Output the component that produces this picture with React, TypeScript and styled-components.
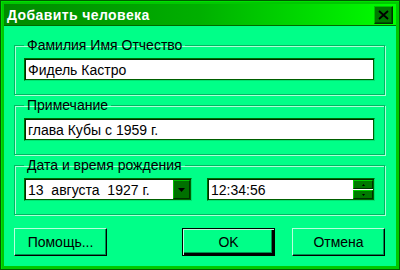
import styled, { createGlobalStyle } from "styled-components";

const GlobalStyle = createGlobalStyle`
  html, body {
    margin: 0;
    padding: 0;
    background: #00cc00;
  }
  * {
    box-sizing: border-box;
  }
`;

const Window = styled.div`
  width: 400px;
  height: 270px;
  display: flex;
  flex-direction: column;
  padding: 3px;
  background: #00c800;
  border: 1px solid #005a00;
  box-shadow: inset 1px 1px 0 #00e000;
  font-family: "Liberation Sans", Arial, sans-serif;
  font-size: 14px;
  color: #000;
`;

const TitleBar = styled.div`
  height: 22px;
  flex: none;
  display: flex;
  align-items: center;
  justify-content: space-between;
  padding: 0 3px 0 3px;
  background: linear-gradient(to right, #008a00, #00b000 50%, #00ff00);
  border-bottom: 1px solid #006a00;
`;

const Title = styled.span`
  color: #fff;
  font-weight: bold;
  font-size: 14px;
  letter-spacing: 0.4px;
`;

const CloseButton = styled.button`
  width: 19px;
  height: 18px;
  padding: 0;
  display: flex;
  align-items: center;
  justify-content: center;
  background: #007a00;
  border: 1px solid;
  border-color: #00c000 #003000 #003000 #00c000;
  box-shadow: inset -1px -1px 0 #005000;
`;

const Body = styled.div`
  flex: 1;
  display: flex;
  flex-direction: column;
  gap: 3px;
  padding: 12px 11px 0 10px;
  background: #00ff88;
`;

const Group = styled.fieldset<{ $last?: boolean }>`
  margin: 0;
  padding: 5px 9px ${(p) => (p.$last ? "11px" : "13px")} 9px;
  border: 1px solid #00b862;
  box-shadow: inset 1px 1px 0 #a8ffd4, 1px 1px 0 #a8ffd4;
  min-width: 0;
`;

const Legend = styled.legend`
  margin-left: 0;
  padding: 0 3px;
  font-size: 14px;
  line-height: 15px;
`;

const Field = styled.div<{ $width?: number }>`
  height: 23px;
  width: ${(p) => (p.$width ? `${p.$width}px` : "100%")};
  display: flex;
  align-items: center;
  background: #fff;
  border: 1px solid;
  border-color: #006a00 #00e070 #00e070 #006a00;
  box-shadow: inset 1px 1px 0 #002a00, inset -1px -1px 0 #006000;
  padding: 0 3px;
  white-space: pre;
`;

const FieldText = styled.span`
  flex: 1;
  padding-top: 1px;
`;

const Row = styled.div`
  display: flex;
  gap: 15px;
  height: 25px;
`;

const DropButton = styled.div`
  width: 17px;
  height: 19px;
  margin-right: -2px;
  display: flex;
  align-items: center;
  justify-content: center;
  background: #007000;
  border: 1px solid;
  border-color: #00c000 #003000 #003000 #00c000;
`;

const Spinner = styled.div`
  display: flex;
  flex-direction: column;
  gap: 1px;
  margin-right: -2px;
`;

const SpinButton = styled.div`
  width: 20px;
  height: 9px;
  display: flex;
  align-items: center;
  justify-content: center;
  background: #007a00;
  border: 1px solid;
  border-color: #00d000 #003000 #003000 #00d000;
`;

const Buttons = styled.div`
  display: flex;
  gap: 17px;
  margin-top: 10px;
`;

const Button = styled.button<{ $default?: boolean; $push?: boolean }>`
  width: 93px;
  height: 28px;
  margin-left: ${(p) => (p.$push ? "auto" : "0")};
  padding: 0;
  font-family: "Liberation Sans", Arial, sans-serif;
  font-size: 14px;
  color: #000;
  background: #00ff88;
  border: 1px solid;
  border-color: ${(p) =>
    p.$default ? "#000" : "#b8ffdc #000 #000 #b8ffdc"};
  box-shadow: ${(p) =>
    p.$default
      ? "inset 1px 1px 0 #b8ffdc, inset -2px -2px 0 #000, inset -3px -3px 0 #009050"
      : "inset -1px -1px 0 #009050"};
`;

const Triangle = ({ up, size }: { up?: boolean; size: number }) => (
  <svg width={size * 2 - 1} height={size} viewBox={`0 0 ${size * 2 - 1} ${size}`}>
    <polygon
      points={
        up
          ? `0,${size} ${size - 0.5},0 ${size * 2 - 1},${size}`
          : `0,0 ${size * 2 - 1},0 ${size - 0.5},${size}`
      }
      fill="#000"
    />
  </svg>
);

export default function App() {
  return (
    <>
      <GlobalStyle />
      <Window>
        <TitleBar>
          <Title>Добавить человека</Title>
          <CloseButton aria-label="Закрыть">
            <svg width="11" height="10" viewBox="0 0 11 10">
              <path d="M1 1 L10 9 M10 1 L1 9" stroke="#000" strokeWidth="1.8" />
            </svg>
          </CloseButton>
        </TitleBar>
        <Body>
          <Group>
            <Legend>Фамилия Имя Отчество</Legend>
            <Field>
              <FieldText>Фидель Кастро</FieldText>
            </Field>
          </Group>
          <Group>
            <Legend>Примечание</Legend>
            <Field>
              <FieldText>глава Кубы с 1959 г.</FieldText>
            </Field>
          </Group>
          <Group $last>
            <Legend>Дата и время рождения</Legend>
            <Row>
              <Field $width={168}>
                <FieldText>13  августа  1927 г.</FieldText>
                <DropButton>
                  <Triangle size={4} />
                </DropButton>
              </Field>
              <Field $width={168}>
                <FieldText>12:34:56</FieldText>
                <Spinner>
                  <SpinButton>
                    <Triangle up size={2} />
                  </SpinButton>
                  <SpinButton>
                    <Triangle size={2} />
                  </SpinButton>
                </Spinner>
              </Field>
            </Row>
          </Group>
          <Buttons>
            <Button>Помощь...</Button>
            <Button $default $push>
              OK
            </Button>
            <Button>Отмена</Button>
          </Buttons>
        </Body>
      </Window>
    </>
  );
}
